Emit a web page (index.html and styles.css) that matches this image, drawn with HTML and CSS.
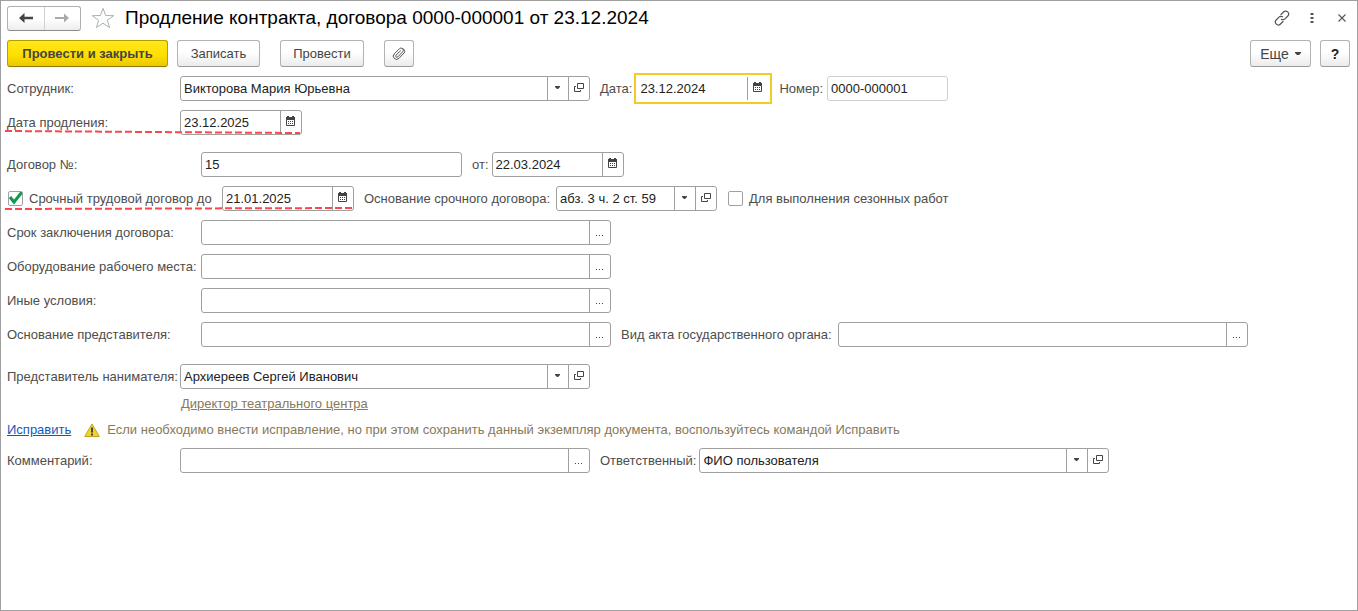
FILE: index.html
```html
<!DOCTYPE html>
<html lang="ru">
<head>
<meta charset="utf-8">
<meta name="viewport" content="width=device-width, initial-scale=1">
<title>Продление контракта, договора 0000-000001 от 23.12.2024</title>
<link rel="stylesheet" href="styles.css">
</head>
<body>
<svg class="sprite" aria-hidden="true">
  <symbol id="i-calendar" viewBox="-1 0 12 11">
    <path d="M.5 2.500h8v7h-8z" fill="none" stroke="#444"/>
    <path d="M0 1h9v3H0zM1 0h2v1H1zM6 0h2v1H6z" fill="#444"/>
    <path d="M2 5h1v1H2zM4 5h1v1H4zM6 5h1v1H6zM2 7h1v1H2zM4 7h1v1H4zM6 7h1v1H6z" fill="#444"/>
  </symbol>
  <symbol id="i-open" viewBox="-1 0 12 11">
    <path d="M3.500 1.500h6v5h-6zM2 4.500H.5v5h6V8" fill="none" stroke="#444"/>
  </symbol>
  <symbol id="i-caret" viewBox="0 0 12 11">
    <path d="M3 4h5v1L6 7H5L3 5z" fill="#444"/>
  </symbol>
  <symbol id="i-dots" viewBox="-1 0 12 11">
    <path d="M1 9h1v1H1zM4 9h1v1H4zM7 9h1v1H7z" fill="#444"/>
  </symbol>
</svg>

<main class="window">
  <header class="titlebar">
    <div class="nav">
      <button type="button" aria-label="Назад"><svg width="16" height="12" viewBox="0 0 16 12"><path d="M1 6 6.500 1v3.800H15v2.400H6.500V11z" fill="#444"/></svg></button>
      <button type="button" aria-label="Вперед"><svg width="16" height="12" viewBox="0 0 16 12"><path d="M15 6 10 1.500v3.500H1v2h9v3.500z" fill="#aaa"/></svg></button>
    </div>
    <button type="button" class="plain" aria-label="В избранное"><svg width="24" height="22" viewBox="0 0 24 22"><path d="M12 1.300 14.700 8.500 22.800 8.700 16.300 13.300 18.600 20.600 12 16.200 5.400 20.600 7.700 13.300 1.200 8.700 9.300 8.500z" fill="#fff" stroke="#a9b0b5"/></svg></button>
    <h1>Продление контракта, договора 0000-000001 от 23.12.2024</h1>
    <div class="tools">
      <button type="button" class="plain" aria-label="Получить ссылку"><svg width="16" height="16" viewBox="0 0 16 16" fill="none" stroke="#555" stroke-width="1.200" stroke-linecap="round"><path d="M7 4.500 9.500 2a2.900 2.900 0 0 1 4.300 4L11 8.800a2.900 2.900 0 0 1-3.600.4M9 11.500 6.500 14a2.900 2.900 0 0 1-4.300-4L5 7.200a2.900 2.900 0 0 1 3.600-.4"/></svg></button>
      <button type="button" class="plain" aria-label="Меню"><svg width="4" height="12" viewBox="0 0 4 12"><path d="M.5 1h3v2h-3zM.5 5h3v2h-3zM.5 9h3v2h-3z" fill="#555"/></svg></button>
      <button type="button" class="plain close" aria-label="Закрыть"><svg width="8" height="8" viewBox="0 0 8 8"><path d="M.5.5l7 7M7.500.5l-7 7" stroke="#555" stroke-width="1.100"/></svg></button>
    </div>
  </header>

  <div class="commands">
    <button type="button" class="btn primary">Провести и закрыть</button>
    <button type="button" class="btn save">Записать</button>
    <button type="button" class="btn post">Провести</button>
    <button type="button" class="btn square" aria-label="Присоединенные файлы"><svg width="14" height="14" viewBox="0 0 14 14" fill="none" stroke="#555" stroke-linecap="round"><path d="M12.500 5.500 7 11.300a3.200 3.200 0 0 1-4.800-4.400L7.400 1.800a2.200 2.200 0 0 1 3.300 3L5.900 9.800a1.200 1.200 0 0 1-1.900-1.600L8.500 3.800M12.500 5.500a2.500 2.500 0 0 0-1.500-3.800"/></svg></button>
    <button type="button" class="btn more">Еще <svg width="6" height="4" viewBox="0 0 6 4"><path d="M0 0h6v1L4 3H2L0 1z" fill="#444"/></svg></button>
    <button type="button" class="btn square help">?</button>
  </div>

  <form class="form">
    <div class="row">
      <label class="cap" for="employee">Сотрудник:</label>
      <div class="field wide"><input id="employee" type="text" value="Викторова Мария Юрьевна"><button type="button" aria-label="Выбрать"><svg><use href="#i-caret"/></svg></button><button type="button" aria-label="Открыть"><svg><use href="#i-open"/></svg></button></div>
      <label class="next" for="date">Дата:</label>
      <div class="field focused"><input id="date" type="text" value="23.12.2024"><button type="button" aria-label="Календарь"><svg><use href="#i-calendar"/></svg></button></div>
      <label class="after-focus" for="number">Номер:</label>
      <div class="field number"><input id="number" type="text" value="0000-000001"></div>
    </div>

    <div class="row">
      <div class="marked">
        <label class="cap" for="prolong">Дата продления:</label>
        <div class="field date-short"><input id="prolong" type="text" value="23.12.2025"><button type="button" aria-label="Календарь"><svg><use href="#i-calendar"/></svg></button></div>
        <svg class="mark" aria-hidden="true"><line x1="0" y1="1" x2="100%" y2="3"/></svg>
      </div>
    </div>

    <div class="row section">
      <label class="cap long" for="contract">Договор №:</label>
      <div class="field contract"><input id="contract" type="text" value="15"></div>
      <label class="next tight" for="contract-date">от:</label>
      <div class="field date"><input id="contract-date" type="text" value="22.03.2024"><button type="button" aria-label="Календарь"><svg><use href="#i-calendar"/></svg></button></div>
    </div>

    <div class="row">
      <div class="marked">
        <label class="check"><input type="checkbox" checked><span>Срочный трудовой договор до</span></label>
        <div class="field date"><input type="text" aria-label="Срочный трудовой договор до" value="21.01.2025"><button type="button" aria-label="Календарь"><svg><use href="#i-calendar"/></svg></button></div>
        <svg class="mark" aria-hidden="true"><line x1="0" y1="3" x2="100%" y2="2"/></svg>
      </div>
      <label class="next" for="basis">Основание срочного договора:</label>
      <div class="field basis"><input id="basis" type="text" value="абз. 3 ч. 2 ст. 59"><button type="button" aria-label="Выбрать"><svg><use href="#i-caret"/></svg></button><button type="button" aria-label="Открыть"><svg><use href="#i-open"/></svg></button></div>
      <label class="check seasonal"><input type="checkbox"><span>Для выполнения сезонных работ</span></label>
    </div>

    <div class="row">
      <label class="cap long" for="term">Срок заключения договора:</label>
      <div class="field wide"><input id="term" type="text"><button type="button" aria-label="Выбрать"><svg><use href="#i-dots"/></svg></button></div>
    </div>
    <div class="row">
      <label class="cap long" for="equipment">Оборудование рабочего места:</label>
      <div class="field wide"><input id="equipment" type="text"><button type="button" aria-label="Выбрать"><svg><use href="#i-dots"/></svg></button></div>
    </div>
    <div class="row">
      <label class="cap long" for="other">Иные условия:</label>
      <div class="field wide"><input id="other" type="text"><button type="button" aria-label="Выбрать"><svg><use href="#i-dots"/></svg></button></div>
    </div>
    <div class="row">
      <label class="cap long" for="agent-basis">Основание представителя:</label>
      <div class="field wide"><input id="agent-basis" type="text"><button type="button" aria-label="Выбрать"><svg><use href="#i-dots"/></svg></button></div>
      <label class="next" for="act">Вид акта государственного органа:</label>
      <div class="field wide"><input id="act" type="text"><button type="button" aria-label="Выбрать"><svg><use href="#i-dots"/></svg></button></div>
    </div>

    <div class="row section">
      <label class="cap" for="agent">Представитель нанимателя:</label>
      <div class="field wide"><input id="agent" type="text" value="Архиереев Сергей Иванович"><button type="button" aria-label="Выбрать"><svg><use href="#i-caret"/></svg></button><button type="button" aria-label="Открыть"><svg><use href="#i-open"/></svg></button></div>
    </div>
    <div class="position"><a href="#">Директор театрального центра</a></div>

    <div class="notice">
      <a href="#">Исправить</a>
      <svg width="16" height="15" viewBox="0 0 16 15" aria-hidden="true"><path d="M8 1 15.300 13.500H.7z" fill="#f2d32c" stroke="#c3a41c" stroke-linejoin="round"/><path d="M7 4.500h2v5H7zM7 10.500h2v2H7z" fill="#444"/></svg>
      <span>Если необходимо внести исправление, но при этом сохранить данный экземпляр документа, воспользуйтесь командой Исправить</span>
    </div>

    <div class="row">
      <label class="cap" for="comment">Комментарий:</label>
      <div class="field wide"><input id="comment" type="text"><button type="button" aria-label="Выбрать"><svg><use href="#i-dots"/></svg></button></div>
      <label class="next tight" for="responsible">Ответственный:</label>
      <div class="field wide"><input id="responsible" type="text" value="ФИО пользователя"><button type="button" aria-label="Выбрать"><svg><use href="#i-caret"/></svg></button><button type="button" aria-label="Открыть"><svg><use href="#i-open"/></svg></button></div>
    </div>
  </form>
</main>
</body>
</html>
```
FILE: styles.css
```css
* { box-sizing: border-box; }
body {
  margin: 0;
  background: #fff;
  color: #4d4d4d;
  font: 13px/16px "Liberation Sans", Arial, sans-serif;
}
button, input { font: inherit; color: inherit; margin: 0; }
button { padding: 0; }
.sprite { display: none; }
.window {
  min-height: 100vh;
  padding: 4px 7px 4px 6px;
  border: 1px solid #a0a0a0;
}

.titlebar { display: flex; align-items: center; height: 26px; }
.nav {
  display: flex;
  width: 74px;
  height: 25px;
  border: 1px solid #b0b0b0;
  border-bottom-color: #8c8c8c;
  border-radius: 3px;
  background: linear-gradient(#fff 50%, #ededed);
}
.nav button {
  flex: 1;
  display: flex;
  align-items: center;
  justify-content: center;
  border: 0;
  background: none;
}
.nav button + button { border-left: 1px solid #d0d0d0; }
.plain { display: flex; border: 0; background: none; }
.titlebar > .plain { margin: 0 10px; }
h1 { margin: 0; color: #000; font-size: 19px; line-height: 24px; font-weight: 400; }
.tools { display: flex; align-items: center; gap: 20px; margin: 0 4px 0 auto; }
.close { margin-left: 4px; }

.commands { display: flex; margin-top: 9px; }
.btn {
  height: 27px;
  border: 1px solid #b3b3b3;
  border-bottom-color: #999;
  border-radius: 3px;
  background: linear-gradient(#fff 45%, #ebebeb);
  color: #444;
}
.primary {
  width: 161px;
  border-color: #b59c00;
  border-bottom-color: #8f7b00;
  background: linear-gradient(#ffe81a, #ffdf00 55%, #ecc800);
  font-weight: 700;
}
.save { width: 83px; margin-left: 9px; }
.post { width: 84px; margin-left: 20px; }
.square { display: flex; align-items: center; justify-content: center; width: 30px; margin-left: 20px; }
.more { display: flex; align-items: center; justify-content: center; gap: 6px; width: 61px; margin-left: auto; font-size: 14px; }
.help { margin-left: 9px; color: #222; font-size: 14px; font-weight: 700; }

.form { display: flex; flex-direction: column; gap: 9px; margin-top: 9px; }
.row { display: flex; align-items: center; height: 25px; }
.section { margin-top: 8px; }
label { white-space: nowrap; }
.cap { flex: none; width: 173px; }
.long { width: 194px; }
.next { margin: 0 6px 0 10px; }
.tight { margin-right: 3px; }

.field {
  display: flex;
  min-width: 0;
  height: 25px;
  border: 1px solid #a0a0a0;
  border-radius: 3px;
  background: #fff;
}
.field input {
  flex: 1;
  width: 100%;
  min-width: 0;
  padding: 0 3px;
  border: 0;
  outline: 0;
  background: none;
  color: #222;
}
.field button {
  flex: none;
  display: flex;
  align-items: center;
  justify-content: center;
  width: 21px;
  padding-bottom: 2px;
  border: 0;
  border-left: 1px solid #a0a0a0;
  background: none;
}
.field svg { width: 12px; height: 11px; }
.wide { flex: 0 1 410px; }
.contract { flex: 0 1 261px; }
.basis { flex: 0 1 161px; }
.date { width: 132px; }
.date-short { width: 122px; }
.number { flex: 0 1 121px; border-color: #d0d0d0; }
.focused {
  width: 138px;
  height: 31px;
  padding: 2px 2px 2px 1px;
  border: 2px solid #f5c926;
  border-radius: 0;
}
.row .focused { margin-left: -4px; }
.after-focus { margin: 0 4px 0 7px; }

.marked { position: relative; display: flex; align-items: center; }
.mark { position: absolute; left: -2px; bottom: 1px; width: 100%; height: 4px; }
.mark line { stroke: #f9474b; stroke-width: 2; stroke-dasharray: 7 3; }

.check { display: flex; align-items: center; gap: 6px; }
.marked .check { width: 215px; padding-left: 1px; }
.seasonal { margin-left: 11px; }
.check input {
  appearance: none;
  width: 15px;
  height: 15px;
  border: 1px solid #a0a0a0;
  border-radius: 2px;
  background: #fff;
}
.check input:checked {
  background: url("data:image/svg+xml,%3Csvg xmlns='http://www.w3.org/2000/svg' viewBox='0 0 15 15'%3E%3Cpath d='M2 6 6 11 14 1' fill='none' stroke='%23109a50' stroke-width='3'/%3E%3C/svg%3E") center / 15px 15px border-box no-repeat;
}

.position { margin-left: 174px; line-height: 16px; margin-top: -2px; }
.position a { color: #87795a; }
.notice { display: flex; align-items: center; height: 18px; color: #87795a; }
.notice a { color: #1259bd; }
.notice svg { flex: none; margin: 0 7px 0 13px; }
```
